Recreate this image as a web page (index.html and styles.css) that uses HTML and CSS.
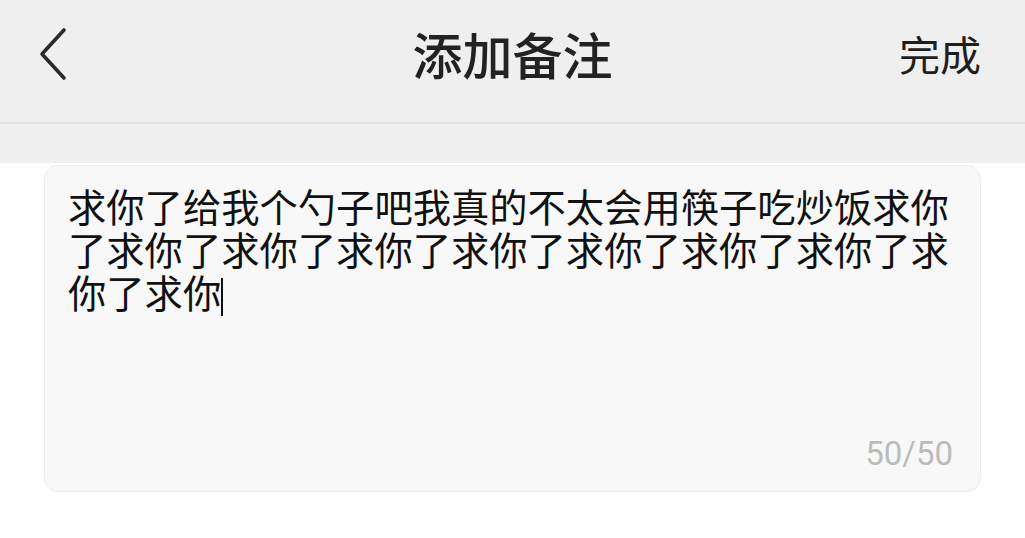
FILE: index.html
```html
<!DOCTYPE html>
<html lang="zh">
<head>
<meta charset="utf-8">
<link rel="stylesheet" href="styles.css">
</head>
<body>
<header class="nav">
  <div class="nav-back">
    <svg width="40" height="60" viewBox="0 0 40 60"><path d="M25 6 L3 30 L25 54" fill="none" stroke="#2a2a2a" stroke-width="3.6" stroke-linecap="round" stroke-linejoin="round"/></svg>
  </div>
  <div class="nav-title">添加备注</div>
  <div class="nav-done">完成</div>
</header>
<div class="band"></div>
<main class="content">
  <div class="card">
    <div class="note">求你了给我个勺子吧我真的不太会用筷子吃炒饭求你了求你了求你了求你了求你了求你了求你了求你了求你了求你<span class="caret"></span></div>
    <div class="count">50/50</div>
  </div>
</main>
</body>
</html>
```
FILE: styles.css
```css
html, body {
  margin: 0;
  padding: 0;
  background: #ffffff;
  width: 1025px;
  height: 538px;
  overflow: hidden;
  font-family: "Noto Sans CJK SC", "Noto Sans", sans-serif;
}
.nav {
  height: 122px;
  background: #efefef;
  border-bottom: 2px solid #e3e3e3;
  display: grid;
  grid-template-columns: 200px 1fr 200px;
  align-items: center;
  box-sizing: content-box;
}
.nav-back {
  padding-left: 39px;
  display: flex;
  align-items: center;
  margin-top: -14px;
}
.nav-title {
  text-align: center;
  font-size: 50px;
  font-weight: 500;
  color: #222222;
  margin-top: -16px;
}
.nav-done {
  text-align: right;
  padding-right: 44px;
  font-size: 41px;
  color: #1e1e1e;
  margin-top: -16px;
}
.band {
  height: 39px;
  background: #f0f0f0;
}
.content {
  padding: 2px 44px 0 44px;
}
.card {
  height: 327px;
  box-sizing: border-box;
  background: #f8f8f8;
  border: 1px solid #ececec;
  border-radius: 14px;
  display: flex;
  flex-direction: column;
  padding: 18px 27px 18px 23px;
}
.note {
  flex: 1;
  font-size: 38.3px;
  line-height: 43px;
  color: #111111;
  width: 892px;
  word-break: break-all;
}
.caret {
  display: inline-block;
  width: 2px;
  height: 38px;
  background: #111111;
  vertical-align: -8px;
}
.count {
  align-self: flex-end;
  font-family: Roboto, "Noto Sans", sans-serif;
  font-size: 33px;
  color: #bcbcbc;
}
```
